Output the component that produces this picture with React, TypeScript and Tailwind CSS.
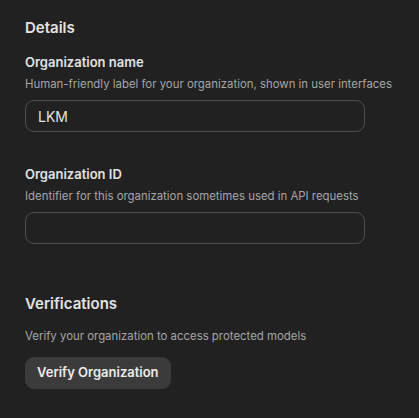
import React from 'react';

export default function App() {
  return (
    <div className="min-h-[418px] w-full bg-[#212121] px-[25px] pt-[18px] text-[#ececec]" style={{ fontFamily: 'Inter, "Noto Sans", sans-serif' }}>
      <h2 className="text-[15px] font-semibold leading-[20px] text-[#e3e3e3]">Details</h2>

      <div className="mt-[15px]">
        <label className="block text-[13px] font-semibold leading-[18px] text-[#e3e3e3]">Organization name</label>
        <p className="mt-[5px] whitespace-nowrap text-[11.4px] leading-[16px] text-[#a6a6a6]">Human-friendly label for your organization, shown in user interfaces</p>
        <input
          type="text"
          defaultValue="LKM"
          className="mt-[8px] h-[32px] w-[340px] rounded-[9px] border border-[#4e4e4e] bg-transparent px-[12px] text-[14px] text-[#e3e3e3] outline-none"
        />
      </div>

      <div className="mt-[33px]">
        <label className="block text-[13px] font-semibold leading-[18px] text-[#e3e3e3]">Organization ID</label>
        <p className="mt-[5px] whitespace-nowrap text-[11.4px] leading-[16px] text-[#a6a6a6]">Identifier for this organization sometimes used in API requests</p>
        <input
          type="text"
          defaultValue=""
          className="mt-[8px] h-[32px] w-[340px] rounded-[9px] border border-[#4e4e4e] bg-transparent px-[12px] text-[14px] text-[#e3e3e3] outline-none"
        />
      </div>

      <h2 className="mt-[50px] text-[15px] font-semibold leading-[20px] text-[#e3e3e3]">Verifications</h2>
      <p className="mt-[14px] whitespace-nowrap text-[11.4px] leading-[16px] text-[#a6a6a6]">Verify your organization to access protected models</p>
      <button className="mt-[13px] h-[32px] rounded-[9px] bg-[#3b3b3b] px-[12px] text-[13px] font-semibold text-[#ececec]">
        Verify Organization
      </button>
    </div>
  );
}
